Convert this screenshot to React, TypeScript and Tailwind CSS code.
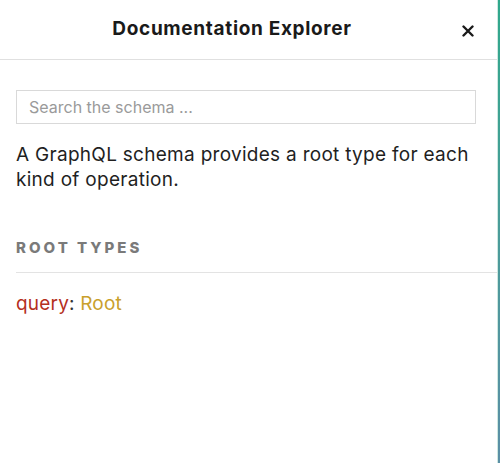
import React from "react";

export default function App() {
  return (
    <div
      className="w-[500px] h-[463px] bg-white flex text-[#1f1f1f] overflow-hidden"
      style={{ fontFamily: "Inter, 'Open Sans', sans-serif" }}
    >
      <div className="flex-1 flex flex-col min-w-0">
        <div className="h-[60px] border-b border-[#e0e0e0] flex items-center">
          <div className="flex-1 text-center text-[19px] font-bold tracking-[0.035em] text-[#1a1a1a] pl-[25px]">
            Documentation Explorer
          </div>
          <button className="w-[58px] h-full flex items-center justify-center pt-[3px]">
            <svg width="12" height="12" viewBox="0 0 12 12">
              <path d="M1.5 1.5 L10.5 10.5 M10.5 1.5 L1.5 10.5" stroke="#1a1a1a" strokeWidth="2.4" strokeLinecap="round" />
            </svg>
          </button>
        </div>
        <div className="pt-[30px] pl-4">
          <div className="mr-[21px] h-[34px] border border-[#d9d9d9] flex items-center px-3 text-[16px] text-[#9a9a9a]">
            Search the schema ...
          </div>
          <p className="mt-[18px] text-[19px] leading-[25px] tracking-[0.015em] text-[#1f1f1f] pr-4">
            A GraphQL schema provides a root type for each kind of operation.
          </p>
          <div className="mt-[46px] pb-[14px] border-b border-[#e3e3e3] text-[15px] leading-[20px] font-extrabold tracking-[0.2em] text-[#7a7a7a]">
            ROOT TYPES
          </div>
          <div className="mt-[17px] text-[19px] tracking-[0.01em]">
            <span className="text-[#b5301e]">query</span>
            <span className="text-[#333]">: </span>
            <span className="text-[#c9a02c]">Root</span>
          </div>
        </div>
      </div>
      <div className="w-[3px] bg-gradient-to-b from-[#2fa88c] to-[#5b8fa6] border-l border-[#cfe8e0]" />
    </div>
  );
}
